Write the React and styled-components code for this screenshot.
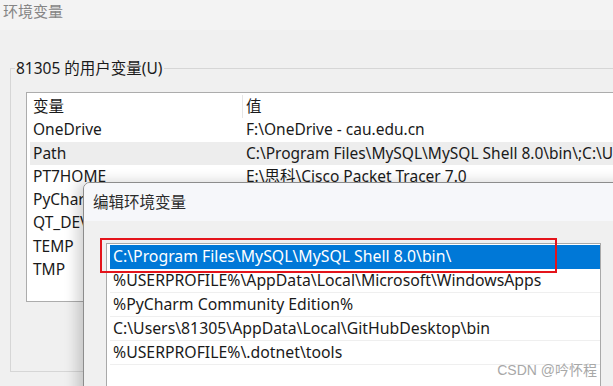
import React from "react";
import styled, { createGlobalStyle } from "styled-components";

const GlobalStyle = createGlobalStyle`
  body {
    margin: 0;
    font-family: "Noto Sans", "Noto Sans CJK SC", sans-serif;
  }
`;

const Screen = styled.div`
  position: relative;
  width: 613px;
  height: 386px;
  overflow: hidden;
  background: #f0f0f0;
  color: #1a1a1a;
  font-size: 15.5px;
`;

const TitleBar = styled.div`
  height: 30px;
  padding-left: 3px;
  background: #f3f3f3;
  color: #858585;
  font-size: 15px;
  line-height: 22px;
`;

const Group = styled.fieldset`
  margin: 28px 0 0 10px;
  padding: 14px 0 0 15px;
  height: 298px;
  border: 1px solid #d6d6d6;
  border-right: none;
`;

const Legend = styled.legend`
  margin-left: -11px;
  padding: 0 1px;
  font-size: 15.5px;
  line-height: 20px;
  color: #1a1a1a;
`;

const VarTable = styled.div`
  height: 206px;
  background: #fff;
  border: 1px solid #acacac;
  border-right: none;
  padding-top: 2px;
`;

const Row = styled.div`
  display: grid;
  grid-template-columns: 213px 1fr;
  height: 23.3px;
  line-height: 23px;
  margin-left: 3px;
  white-space: nowrap;
  overflow: hidden;
  background: ${(p) => (p.$active ? "#ededed" : "transparent")};
`;

const Cell = styled.div`
  padding-left: 3px;
  border-right: ${(p) => (p.$sep ? "1px solid #e6e6e6" : "none")};
  overflow: hidden;
`;

const Dialog = styled.div`
  position: absolute;
  left: 83px;
  top: 182px;
  width: 560px;
  height: 240px;
  border: 1px solid #8c8c8c;
  border-radius: 7px 0 0 0;
  background: #f0f0f0;
  box-shadow: -6px 0 14px rgba(0, 0, 0, 0.18);
  overflow: hidden;
`;

const DialogTitle = styled.div`
  height: 38px;
  padding-left: 9px;
  background: #f6f7fa;
  color: #2b2b2b;
  font-size: 15.5px;
  line-height: 38px;
`;

const DialogBody = styled.div`
  padding: 22px 0 0 22px;
`;

const PathList = styled.div`
  position: relative;
  width: 493px;
  height: 200px;
  background: #fff;
  border: 1px solid #a9a9a9;
  padding-top: 1px;
  font-size: 15.8px;
`;

const PathItem = styled.div`
  height: 23px;
  line-height: 23px;
  margin-left: 3px;
  padding-left: 3px;
  white-space: nowrap;
  color: ${(p) => (p.$selected ? "#fff" : "#1a1a1a")};
  background: ${(p) => (p.$selected ? "#0078d7" : "#fff")};
  border-bottom: 1px solid ${(p) => (p.$selected ? "#0078d7" : "#efefef")};
`;

const Highlight = styled.div`
  position: absolute;
  left: -7px;
  top: -6px;
  width: 453px;
  height: 31px;
  border: 2px solid #e4141b;
  pointer-events: none;
`;

const Watermark = styled.div`
  position: absolute;
  right: 16px;
  bottom: 7px;
  font-family: "Liberation Sans", "Noto Sans CJK SC", sans-serif;
  font-size: 14px;
  color: #a8a8a8;
`;

const vars = [
  ["OneDrive", "F:\\OneDrive - cau.edu.cn"],
  ["Path", "C:\\Program Files\\MySQL\\MySQL Shell 8.0\\bin\\;C:\\Users\\81305"],
  ["PT7HOME", "E:\\思科\\Cisco Packet Tracer 7.0"],
  ["PyCharm Community Edition", "C:\\Program Files\\JetBrains"],
  ["QT_DEVICE_PIXEL_RATIO", "auto"],
  ["TEMP", "%USERPROFILE%\\AppData\\Local\\Temp"],
  ["TMP", "%USERPROFILE%\\AppData\\Local\\Temp"],
];

const paths = [
  "C:\\Program Files\\MySQL\\MySQL Shell 8.0\\bin\\",
  "%USERPROFILE%\\AppData\\Local\\Microsoft\\WindowsApps",
  "%PyCharm Community Edition%",
  "C:\\Users\\81305\\AppData\\Local\\GitHubDesktop\\bin",
  "%USERPROFILE%\\.dotnet\\tools",
];

const App = () => {
  return (
    <>
      <GlobalStyle />
      <Screen>
        <TitleBar>环境变量</TitleBar>
        <Group>
          <Legend>81305 的用户变量(U)</Legend>
          <VarTable>
            <Row>
              <Cell $sep>变量</Cell>
              <Cell>值</Cell>
            </Row>
            {vars.map(([name, value]) => (
              <Row key={name} $active={name === "Path"}>
                <Cell>{name}</Cell>
                <Cell>{value}</Cell>
              </Row>
            ))}
          </VarTable>
        </Group>

        <Dialog>
          <DialogTitle>编辑环境变量</DialogTitle>
          <DialogBody>
            <PathList>
              {paths.map((p, i) => (
                <PathItem key={p} $selected={i === 0}>
                  {p}
                </PathItem>
              ))}
              <Highlight />
            </PathList>
          </DialogBody>
        </Dialog>
        <Watermark>CSDN @吟怀程</Watermark>
      </Screen>
    </>
  );
};

export default App;
